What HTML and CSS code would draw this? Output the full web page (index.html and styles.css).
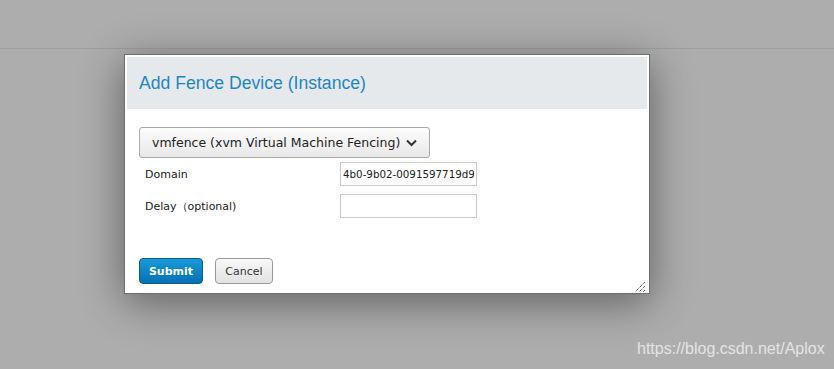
FILE: index.html
```html
<!DOCTYPE html>
<html lang="en">
<head>
  <meta charset="UTF-8" />
  <title>Add Fence Device</title>
  <link rel="stylesheet" href="styles.css">
</head>
<body>
  <div class="topbar"></div>

  <div class="dialog">
    <div class="dialog-head">
      <h2>Add Fence Device (Instance)</h2>
    </div>

    <div class="dialog-body">
      <button class="select-btn">
        vmfence (xvm Virtual Machine Fencing)
        <svg width="11" height="8" viewBox="0 0 11 8"><path d="M1 1.5 L5.5 6 L10 1.5" fill="none" stroke="#333" stroke-width="2"/></svg>
      </button>

      <div class="field">
        <label>Domain</label>
        <input type="text" class="text-in" value="4b0-9b02-0091597719d9" />
      </div>
      <div class="field">
        <label>Delay（optional)</label>
        <input type="text" class="text-in" value="" />
      </div>
    </div>

    <div class="dialog-foot">
      <button class="btn btn-primary">Submit</button>
      <button class="btn btn-default">Cancel</button>
    </div>

    <div class="grip">
      <svg width="12" height="12" viewBox="0 0 12 12">
        <path d="M11 1 L1 11 M11 5 L5 11 M11 9 L9 11" stroke="#222" stroke-width="1" stroke-dasharray="1 1"/>
      </svg>
    </div>
  </div>

  <div class="watermark">https://blog.csdn.net/Aplox</div>
</body>
</html>
```

FILE: styles.css
```css
body {
  margin: 0;
  width: 834px;
  height: 369px;
  background: #adadad;
  font-family: "DejaVu Sans", sans-serif;
  color: #333;
  position: relative;
  overflow: hidden;
}

.topbar {
  height: 48px;
  border-bottom: 1px solid #9ba29e;
}

.dialog {
  position: absolute;
  left: 124px;
  top: 54px;
  width: 520px;
  height: 234px;
  padding: 2px;
  background: #fff;
  border: 1px solid #6e6e6e;
  box-shadow: 0 8px 40px rgba(0, 0, 0, 0.45);
  display: flex;
  flex-direction: column;
}

.dialog-head {
  background: #e6e9eb;
  height: 52px;
  display: flex;
  align-items: center;
  padding-left: 12px;
}

.dialog-head h2 {
  margin: 0;
  font-family: "Liberation Sans", sans-serif;
  font-weight: normal;
  font-size: 17.6px;
  color: #1a86c6;
  padding-top: 1px;
}

.dialog-body {
  padding: 18px 12px 0;
}

.select-btn {
  display: flex;
  align-items: center;
  gap: 6px;
  height: 31px;
  padding: 0 12px 0 12px;
  font-family: "DejaVu Sans", sans-serif;
  font-size: 12.5px;
  color: #222;
  border: 1px solid #aaa;
  border-radius: 3px;
  background: linear-gradient(#fcfcfc, #e8e8e8);
}

.field {
  display: flex;
  align-items: center;
  height: 32px;
}

.field label {
  width: 195px;
  padding-left: 6px;
  font-size: 11px;
  color: #222;
}

.text-in {
  width: 131px;
  height: 20px;
  padding: 1px 2px;
  border: 1px solid #ccc;
  font-family: "DejaVu Sans", sans-serif;
  font-size: 10.3px;
  color: #222;
  text-align: right;
  box-sizing: content-box;
}

.dialog-foot {
  margin-top: auto;
  padding: 0 12px 7px;
  display: flex;
  gap: 12px;
}

.btn {
  height: 26px;
  border-radius: 4px;
  font-family: "DejaVu Sans", sans-serif;
  font-size: 11px;
}

.btn-primary {
  width: 64px;
  color: #fff;
  font-weight: bold;
  border: 1px solid #0a5b8f;
  background: linear-gradient(#189ad8, #0770b4);
}

.btn-default {
  width: 58px;
  color: #333;
  border: 1px solid #999;
  background: linear-gradient(#f8f8f8, #e2e2e2);
}

.grip {
  position: absolute;
  right: 3px;
  bottom: 3px;
  width: 12px;
  height: 12px;
}

.watermark {
  position: absolute;
  left: 637px;
  top: 340px;
  font-family: "Liberation Sans", sans-serif;
  font-size: 16px;
  color: #e4e4e4;
}
```
